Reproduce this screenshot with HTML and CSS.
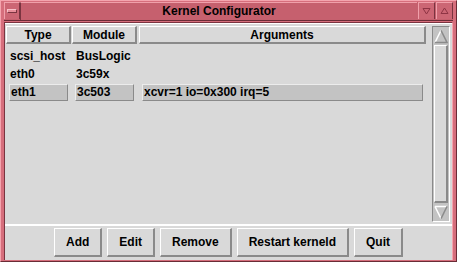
FILE: index.html
```html
<!DOCTYPE html>
<html>
<head>
    <link rel="stylesheet" href="styles.css">
</head>
<body>
<div class="window">
    <div class="titlebar">
        <div class="tb-btn tb-menu"><span class="bar"></span></div>
        <div class="title">Kernel Configurator</div>
        <div class="tb-btn">
            <svg width="9" height="8" viewBox="0 0 9 8"><path d="M1 1.5 L8 1.5 L4.5 7 Z" fill="none" stroke="#8e3444" stroke-width="1"/></svg>
        </div>
        <div class="tb-btn">
            <svg width="9" height="8" viewBox="0 0 9 8"><path d="M1 6.5 L8 6.5 L4.5 1 Z" fill="none" stroke="#8e3444" stroke-width="1"/></svg>
        </div>
    </div>
    <div class="client">
        <div class="main">
            <div class="table">
                <div class="head">
                    <div class="hcell">Type</div>
                    <div class="hcell">Module</div>
                    <div class="hcell">Arguments</div>
                </div>
                <div class="row">
                    <div class="cell">scsi_host</div>
                    <div class="cell">BusLogic</div>
                    <div class="cell"></div>
                </div>
                <div class="row">
                    <div class="cell">eth0</div>
                    <div class="cell">3c59x</div>
                    <div class="cell"></div>
                </div>
                <div class="row selected">
                    <div class="cell">eth1</div>
                    <div class="cell">3c503</div>
                    <div class="cell">xcvr=1 io=0x300 irq=5</div>
                </div>
            </div>
            <div class="scroll">
                <div class="arrow">
                    <svg width="15" height="15" viewBox="0 0 15 15">
                        <path d="M7.5 1 L1 14" stroke="#ffffff" stroke-width="1.5" fill="none"/>
                        <path d="M7.5 1 L14 14 L1 14" stroke="#8a8a8a" stroke-width="1.5" fill="none"/>
                    </svg>
                </div>
                <div class="slider"></div>
                <div class="arrow">
                    <svg width="15" height="15" viewBox="0 0 15 15">
                        <path d="M1 1 L14 1 M1 1 L7.5 14" stroke="#ffffff" stroke-width="1.5" fill="none"/>
                        <path d="M14 1 L7.5 14" stroke="#8a8a8a" stroke-width="1.5" fill="none"/>
                    </svg>
                </div>
            </div>
        </div>
        <div class="buttons">
            <button class="btn">Add</button>
            <button class="btn">Edit</button>
            <button class="btn">Remove</button>
            <button class="btn">Restart kerneld</button>
            <button class="btn">Quit</button>
        </div>
    </div>
</div>
</body>
</html>
```

FILE: styles.css
```css
body {
    margin: 0;
    background-color: #d9d9d9;
    font-family: "Liberation Sans", Arial, sans-serif;
    font-size: 12px;
    font-weight: bold;
}
.window {
    width: 457px;
    height: 262px;
    box-sizing: border-box;
    display: flex;
    flex-direction: column;
    background-color: #d66e7c;
    border-top: 1px solid #f4a4ae;
    border-left: 1px solid #f4a4ae;
    border-right: 1px solid #6a2c36;
    border-bottom: 1px solid #6a2c36;
    padding: 1px 3px 3px 3px;
}
.titlebar {
    display: flex;
    height: 18px;
    background-color: #c6606e;
    border-bottom: 1px solid #6a2c36;
}
.tb-btn {
    height: 17px;
    display: flex;
    align-items: center;
    justify-content: center;
    background-color: #cc6674;
    border-top: 1px solid #f0a0aa;
    border-left: 1px solid #f0a0aa;
    border-right: 1px solid #7a3440;
    margin-left: 1px;
    box-sizing: border-box;
    width: 17px;
}
.tb-menu {
    margin-left: 0;
    width: 16px;
}
.bar {
    width: 8px;
    height: 2px;
    background-color: #e88e9a;
    border-top: 1px solid #f8c0c8;
    border-bottom: 1px solid #7a3440;
    border-left: 1px solid #f8c0c8;
    border-right: 1px solid #7a3440;
}
.title {
    flex: 1;
    text-align: center;
    line-height: 17px;
    color: #000;
    border-left: 1px solid #7a3440;
    border-top: 1px solid #f0a0aa;
    box-sizing: border-box;
}
.client {
    flex: 1;
    margin-top: 1px;
    display: flex;
    flex-direction: column;
    background-color: #d9d9d9;
    border-top: 1px solid #7a3440;
    border-left: 1px solid #7a3440;
    border-right: 1px solid #f4a4ae;
}
.main {
    flex: 1;
    display: flex;
    padding: 2px 2px 2px 1px;
    border-top: 1px solid #ffffff;
}
.table {
    flex: 1;
}
.head {
    display: grid;
    grid-template-columns: 65px 65px 288px;
    column-gap: 1px;
}
.hcell {
    height: 18px;
    line-height: 16px;
    text-align: center;
    box-sizing: border-box;
    border-top: 1px solid #ffffff;
    border-left: 1px solid #ffffff;
    border-right: 2px solid #8a8a8a;
    border-bottom: 2px solid #8a8a8a;
}
.head .hcell:nth-child(3) {
    margin-left: 1px;
}
.row {
    display: grid;
    grid-template-columns: 65px 65px 288px;
    column-gap: 1px;
    margin-top: 1px;
}
.head + .row {
    margin-top: 4px;
}
.cell {
    height: 17px;
    line-height: 17px;
    margin: 0 3px;
    padding-left: 1px;
    box-sizing: border-box;
    white-space: nowrap;
}
.row .cell:nth-child(3) {
    margin-left: 4px;
}
.selected .cell {
    background-color: #c3c3c3;
    border-top: 1px solid #ececec;
    border-left: 1px solid #ececec;
    border-right: 1px solid #8a8a8a;
    border-bottom: 1px solid #8a8a8a;
    line-height: 15px;
}
.scroll {
    width: 18px;
    height: 196px;
    margin-left: 2px;
    box-sizing: border-box;
    display: flex;
    flex-direction: column;
    padding: 1px;
    background-color: #c3c3c3;
    border-top: 1px solid #8a8a8a;
    border-left: 1px solid #8a8a8a;
    border-right: 1px solid #ffffff;
    border-bottom: 1px solid #ffffff;
}
.arrow {
    height: 16px;
    display: flex;
    justify-content: center;
    align-items: center;
    background-color: #c3c3c3;
}
.slider {
    flex: 1;
    margin: 1px 0;
    background-color: #d9d9d9;
    border-top: 1px solid #ffffff;
    border-left: 1px solid #ffffff;
    border-right: 2px solid #8a8a8a;
    border-bottom: 2px solid #8a8a8a;
}
.buttons {
    display: flex;
    justify-content: center;
    gap: 5px;
    padding: 2px 0 3px 0;
    border-top: 2px solid #ffffff;
}
.btn {
    height: 29px;
    padding: 0 11px;
    font-family: "Liberation Sans", Arial, sans-serif;
    font-size: 12px;
    font-weight: bold;
    color: #000;
    background-color: #d9d9d9;
    border-top: 1px solid #ffffff;
    border-left: 1px solid #ffffff;
    border-right: 2px solid #8a8a8a;
    border-bottom: 2px solid #8a8a8a;
    border-radius: 0;
}
```
